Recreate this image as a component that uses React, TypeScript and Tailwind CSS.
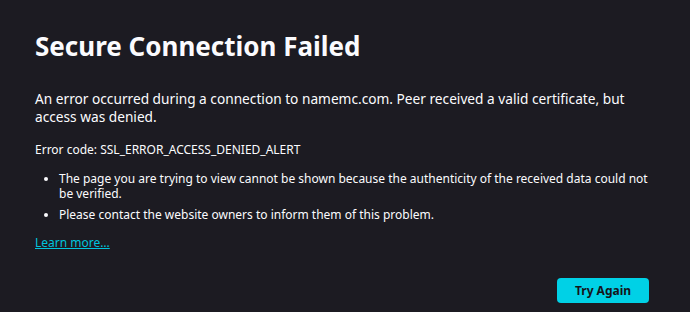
export default function App() {
  return (
    <div className="min-h-[312px] w-full bg-[#1c1b22] text-[#fbfbfe] font-['Noto_Sans',sans-serif]">
      <div className="w-[620px] ml-[35px] pt-[31px]">
        <h1 className="text-[26px] leading-[31px] font-bold">Secure Connection Failed</h1>

        <p className="mt-[28px] text-[13.7px] leading-[18px]">
          An error occurred during a connection to namemc.com. Peer received a valid certificate, but access was denied.
        </p>

        <p className="mt-[16px] text-[12px] leading-[15px]">Error code: SSL_ERROR_ACCESS_DENIED_ALERT</p>

        <ul className="mt-[14px] list-disc pl-[24px] text-[12px] leading-[15px] flex flex-col gap-[6px]">
          <li>
            The page you are trying to view cannot be shown because the authenticity of the received data could not be
            verified.
          </li>
          <li>Please contact the website owners to inform them of this problem.</li>
        </ul>

        <p className="mt-[13px] text-[12px] leading-[15px]">
          <a href="#" className="text-[#00c4dc] underline">
            Learn more…
          </a>
        </p>

        <div className="mt-[28px] flex justify-end pr-[6px]">
          <button className="h-[25px] w-[92px] rounded-[4px] bg-[#00d1e6] text-[12px] font-bold text-[#15141a]">
            Try Again
          </button>
        </div>
      </div>
    </div>
  )
}
